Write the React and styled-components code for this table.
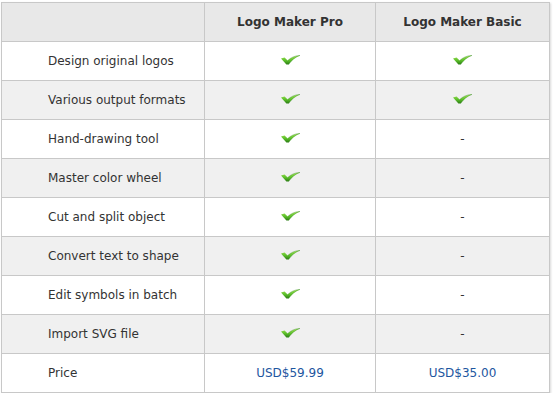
import React from 'react';
import styled, { createGlobalStyle } from 'styled-components';

const rows = [
  { name: 'Design original logos', pro: true, basic: true },
  { name: 'Various output formats', pro: true, basic: true },
  { name: 'Hand-drawing tool', pro: true, basic: false },
  { name: 'Master color wheel', pro: true, basic: false },
  { name: 'Cut and split object', pro: true, basic: false },
  { name: 'Convert text to shape', pro: true, basic: false },
  { name: 'Edit symbols in batch', pro: true, basic: false },
  { name: 'Import SVG file', pro: true, basic: false },
];

function Check() {
  return (
    <svg width="19" height="10" viewBox="0 0 19 10">
      <defs>
        <linearGradient id="tick" x1="0" y1="0" x2="0" y2="1">
          <stop offset="0" stopColor="#a6e55a" />
          <stop offset="0.55" stopColor="#5cbf2a" />
          <stop offset="1" stopColor="#2a7a14" />
        </linearGradient>
      </defs>
      <path
        d="M0 3.6 L3.6 2.6 L6.6 5.6 C10 2.4 14 0.6 19 0.4 C14.6 1.8 10.6 5 7.6 9.6 L5.4 9.6 Z"
        fill="url(#tick)"
      />
      <path
        d="M6.6 5.6 C10 2.4 14 0.6 19 0.4 C14.6 1.8 10.6 5 7.6 9.6"
        fill="none"
        stroke="#2f8a18"
        strokeWidth="0.6"
        opacity="0.6"
      />
    </svg>
  );
}

export default function App() {
  return (
    <>
      <GlobalStyle />
      <Table>
        <thead>
          <tr>
            <HeadCell style={{ width: 202 }} />
            <HeadCell style={{ width: 170 }}>Logo Maker Pro</HeadCell>
            <HeadCell>Logo Maker Basic</HeadCell>
          </tr>
        </thead>
        <tbody>
          {rows.map((r, i) => (
            <Row key={r.name} $alt={i % 2 === 1}>
              <NameCell>{r.name}</NameCell>
              <Cell>{r.pro ? <Check /> : '-'}</Cell>
              <Cell>{r.basic ? <Check /> : '-'}</Cell>
            </Row>
          ))}
          <Row>
            <NameCell>Price</NameCell>
            <Cell><Price>USD$59.99</Price></Cell>
            <Cell><Price>USD$35.00</Price></Cell>
          </Row>
        </tbody>
      </Table>
    </>
  );
}

const GlobalStyle = createGlobalStyle`
  html, body, #root {
    margin: 0;
    padding: 0;
    background: #fff;
  }
  body {
    font-family: "DejaVu Sans", Verdana, sans-serif;
    font-size: 12px;
    color: #333;
  }
`;

const Table = styled.table`
  margin: 2px 0 0 1px;
  width: 549px;
  border-collapse: collapse;
  table-layout: fixed;
  border: 1px solid #c8c8c8;
  box-shadow: 1px 1px 2px rgba(0, 0, 0, 0.15);
`;

const HeadCell = styled.th`
  height: 38px;
  padding: 0;
  background: #e8e8e8;
  border: 1px solid #c8c8c8;
  font-weight: bold;
  font-size: 12px;
  color: #333;
  text-align: center;
`;

const Row = styled.tr`
  background: ${({ $alt }) => ($alt ? '#f0f0f0' : '#fff')};
`;

const Cell = styled.td`
  height: 38px;
  padding: 0;
  border: 1px solid #c8c8c8;
  text-align: center;
  vertical-align: middle;
  line-height: 14px;

  svg {
    display: inline-block;
    vertical-align: middle;
    margin-top: -3px;
  }
`;

const NameCell = styled(Cell)`
  text-align: left;
  padding-left: 46px;
`;

const Price = styled.span`
  color: #1d56a0;
`;
